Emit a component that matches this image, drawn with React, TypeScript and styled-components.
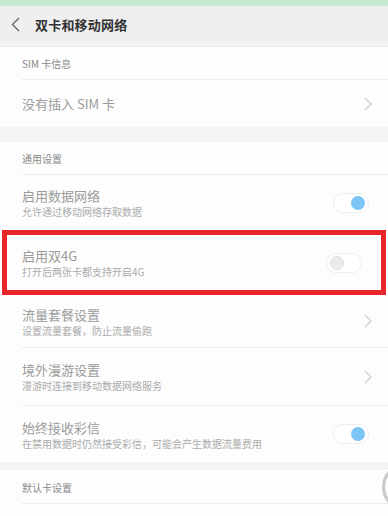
import React from "react";
import styled, { createGlobalStyle } from "styled-components";

const GlobalStyle = createGlobalStyle`
    html, body {
        margin: 0;
        padding: 0;
        background: #ffffff;
    }
    body {
        font-family: "Noto Sans CJK SC", "Noto Sans", sans-serif;
    }
`;

type Item = {
    title: string;
    sub?: string;
    kind: "toggle-on" | "toggle-off" | "arrow";
    height: number;
    divider?: boolean;
};

const ChevronRight = () => (
    <svg width="8" height="14" viewBox="0 0 8 14">
        <polyline points="1,1 7,7 1,13" fill="none" stroke="#cfcfcf" strokeWidth="1.3" />
    </svg>
);

const ChevronLeft = () => (
    <svg width="9" height="15" viewBox="0 0 9 15">
        <polyline points="8,1 1.5,7.5 8,14" fill="none" stroke="#666" strokeWidth="1.4" />
    </svg>
);

const Control: React.FC<{ kind: Item["kind"] }> = ({ kind }) => {
    if (kind === "arrow") return <ArrowWrap><ChevronRight /></ArrowWrap>;
    const on = kind === "toggle-on";
    return (
        <Switch $on={on}>
            <Knob $on={on} />
        </Switch>
    );
};

const SettingRow: React.FC<{ item: Item; inset?: number }> = ({ item, inset = 22 }) => (
    <Row $height={item.height} $inset={inset}>
        <RowInner $divider={!!item.divider}>
            <Texts>
                <Title>{item.title}</Title>
                {item.sub && <Sub>{item.sub}</Sub>}
            </Texts>
            <Control kind={item.kind} />
        </RowInner>
    </Row>
);

export default function App() {
    return (
        <>
            <GlobalStyle />
            <Page>
                <StatusStrip />
                <Header>
                    <BackButton><ChevronLeft /></BackButton>
                    <HeaderTitle>双卡和移动网络</HeaderTitle>
                </Header>
                <HeaderShade />

                <SectionHeader $height={33}>
                    <SectionLabel>SIM 卡信息</SectionLabel>
                </SectionHeader>
                <SettingRow item={{ title: "没有插入 SIM 卡", kind: "arrow", height: 47 }} />

                <Gap $height={15} />

                <SectionHeader $height={33}>
                    <SectionLabel>通用设置</SectionLabel>
                </SectionHeader>
                <SettingRow
                    item={{ title: "启用数据网络", sub: "允许通过移动网络存取数据", kind: "toggle-on", height: 55 }}
                />
                <Highlight>
                    <SettingRow
                        inset={15}
                        item={{ title: "启用双4G", sub: "打开后两张卡都支持开启4G", kind: "toggle-off", height: 55 }}
                    />
                </Highlight>
                <SettingRow
                    item={{ title: "流量套餐设置", sub: "设置流量套餐，防止流量偷跑", kind: "arrow", height: 53, divider: true }}
                />
                <SettingRow
                    item={{ title: "境外漫游设置", sub: "漫游时连接到移动数据网络服务", kind: "arrow", height: 58, divider: true }}
                />
                <SettingRow
                    item={{
                        title: "始终接收彩信",
                        sub: "在禁用数据时仍然接受彩信，可能会产生数据流量费用",
                        kind: "toggle-on",
                        height: 56,
                    }}
                />

                <Gap $height={8} />

                <SectionHeader $height={34}>
                    <SectionLabel>默认卡设置</SectionLabel>
                </SectionHeader>

                <FloatingRing />
            </Page>
        </>
    );
}

const Page = styled.div`
    position: relative;
    width: 388px;
    height: 516px;
    overflow: hidden;
    background: #fdfdfd;
    display: flex;
    flex-direction: column;
`;

const StatusStrip = styled.div`
    height: 6px;
    flex-shrink: 0;
    background: #c8ead0;
`;

const Header = styled.div`
    height: 37px;
    flex-shrink: 0;
    background: #efefef;
    display: flex;
    align-items: center;
    padding-left: 11px;
    box-sizing: border-box;
`;

const HeaderShade = styled.div`
    height: 4px;
    flex-shrink: 0;
    background: #f4f4f4;
    border-bottom: 1px solid #e6e6e6;
    box-sizing: border-box;
`;

const BackButton = styled.div`
    width: 24px;
    display: flex;
    align-items: center;
`;

const HeaderTitle = styled.div`
    font-size: 13px;
    font-weight: 700;
    color: #333;
    letter-spacing: 0.2px;
`;

const SectionHeader = styled.div<{ $height: number }>`
    height: ${(p) => p.$height}px;
    flex-shrink: 0;
    margin-left: 22px;
    border-bottom: 1px solid #ececec;
    box-sizing: border-box;
    display: flex;
    align-items: center;
`;

const SectionLabel = styled.div`
    font-size: 10px;
    color: #8a8a8a;
    padding-top: 1px;
`;

const Gap = styled.div<{ $height: number }>`
    height: ${(p) => p.$height}px;
    flex-shrink: 0;
    background: #f4f4f4;
`;

const Row = styled.div<{ $height: number; $inset: number }>`
    height: ${(p) => p.$height}px;
    flex-shrink: 0;
    padding-left: ${(p) => p.$inset}px;
    box-sizing: border-box;
    display: flex;
`;

const RowInner = styled.div<{ $divider: boolean }>`
    flex: 1;
    display: flex;
    align-items: center;
    justify-content: space-between;
    border-bottom: ${(p) => (p.$divider ? "1px solid #ececec" : "none")};
`;

const Texts = styled.div`
    display: flex;
    flex-direction: column;
    gap: 1px;
`;

const Title = styled.div`
    font-size: 13px;
    line-height: 17px;
    color: #9b9b9b;
`;

const Sub = styled.div`
    font-size: 10px;
    line-height: 13px;
    color: #ababab;
`;

const ArrowWrap = styled.div`
    display: flex;
    align-items: center;
    margin-right: 16px;
`;

const Switch = styled.div<{ $on: boolean }>`
    width: 36px;
    height: 20px;
    margin-right: 19px;
    border-radius: 10px;
    border: 1px solid #eeeeee;
    background: #ffffff;
    box-sizing: border-box;
    display: flex;
    align-items: center;
    justify-content: ${(p) => (p.$on ? "flex-end" : "flex-start")};
    padding: 0 3px;
`;

const Knob = styled.div<{ $on: boolean }>`
    width: 14px;
    height: 14px;
    border-radius: 50%;
    box-sizing: border-box;
    background: ${(p) => (p.$on ? "#7cc5f6" : "#ebebeb")};
    border: ${(p) => (p.$on ? "none" : "1px solid #e0e0e0")};
`;

const Highlight = styled.div`
    flex-shrink: 0;
    margin: 0 2px;
    border: 5px solid #e9262c;
`;

const FloatingRing = styled.div`
    position: absolute;
    left: 382px;
    top: 463px;
    width: 48px;
    height: 48px;
    border-radius: 50%;
    border: 3px solid #c9c9c9;
    box-sizing: border-box;
`;
